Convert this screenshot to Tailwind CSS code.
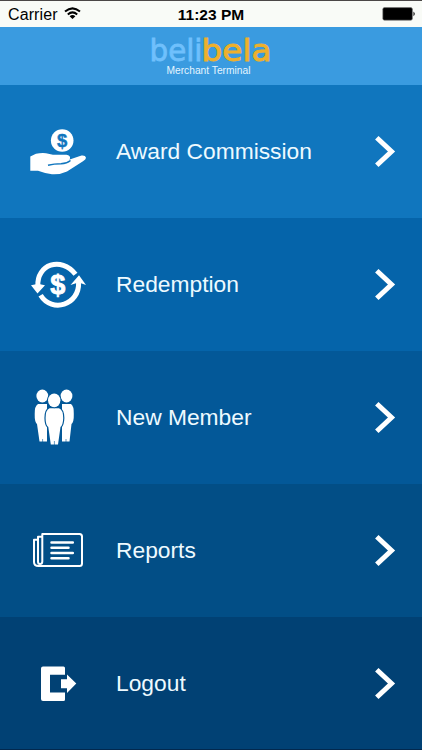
<!DOCTYPE html>
<html lang="en">
<head>
<meta charset="utf-8">
<title>belibela Merchant Terminal</title>
<script src="https://cdn.jsdelivr.net/npm/@tailwindcss/browser@4"></script>
</head>
<body class="w-[422px] h-[750px] overflow-hidden bg-[#02284e] font-['Liberation_Sans',Arial,sans-serif]">
<div class="flex flex-col w-[422px] h-[750px]">
  <div class="h-[27px] shrink-0 bg-[#f9fbf7] border-t border-[#4b4747] grid grid-cols-3 items-center text-black">
    <div class="flex items-center pl-[8px] pt-[2px]">
      <span class="text-[16px] leading-[20px] tracking-[0.1px]">Carrier</span>
      <svg class="ml-[6px] -mt-[3px]" width="17" height="13" viewBox="0 0 17 13" fill="none" stroke="#000" stroke-width="2">
        <path d="M1 4.6Q8.5-1.9 16 4.6M3.8 7.5Q8.5 3.3 13.2 7.5"/><path d="M5.6 9.2Q8.5 6.8 11.4 9.2L8.5 12z" fill="#000" stroke="none"/>
      </svg>
    </div>
    <div class="text-center text-[15.5px] leading-[20px] font-bold pt-[2px] whitespace-nowrap">11:23 PM</div>
    <div class="flex justify-end pr-[6px]">
      <svg width="34" height="14" viewBox="0 0 34 14"><rect x=".8" y=".6" width="29.6" height="12.6" rx="1.6" fill="#000" stroke="#777" stroke-width=".6"/><path d="M31.5 4.6Q34 6.9 31.5 9.2z"/></svg>
    </div>
  </div>
  <header class="h-[58px] shrink-0 bg-[#3a9be0]">
    <svg class="block" width="422" height="58" viewBox="0 27 422 58" font-family="'DejaVu Sans', sans-serif">
      <text x="149.500" y="60.800" font-size="30" textLength="53" lengthAdjust="spacingAndGlyphs" fill="#6fc0fc" stroke="#6fc0fc" stroke-width=".8">beli</text>
      <text x="201.500" y="60.800" font-size="30" textLength="70" lengthAdjust="spacingAndGlyphs" fill="#eeb02c" stroke="#eeb02c" stroke-width=".9">bela</text>
      <text x="166.500" y="73.700" font-family="'Liberation Sans', sans-serif" font-size="10.500" textLength="84" lengthAdjust="spacingAndGlyphs" fill="#e4f5ff">Merchant Terminal</text>
    </svg>
  </header>
  <main class="flex flex-col text-[22.8px] text-[#eefaff]">
    <div class="flex items-center h-[133px] bg-[#1076be]">
      <svg width="100" height="133" viewBox="0 85 100 133" fill="#fff">
        <circle cx="62.200" cy="140.500" r="11.300"/>
        <text x="62.200" y="147" text-anchor="middle" font-size="18.500" font-weight="bold" fill="#1076be" stroke="#1076be" stroke-width=".4">$</text>
        <path d="M30.300 156.500L36 153.800Q41 152.700 46 153.200L53 154.800H66.500Q70.500 155.300 70 158.500Q69.500 160.400 66 160.700L81.500 155.500Q85.500 155 86 157.800Q86 159.500 83 161.300L67 171.500Q60 174.800 52 174.300Q44 173 38 170.700L30.300 170.800z"/>
        <path d="M48 165.300Q54 163.800 61 163.800Q67 163.500 70.500 160.500" fill="none" stroke="#1076be" stroke-width="1.500"/>
      </svg>
      <span class="ml-4 flex-1">Award Commission</span>
      <svg class="mr-[22px]" width="26" height="34" viewBox="0 0 26 34" fill="none" stroke="#fff" stroke-width="5"><path d="M2.800 2.700L17.500 16.500L2.800 30.300"/></svg>
    </div>
    <div class="flex items-center h-[133px] bg-[#0564aa]">
      <svg width="100" height="133" viewBox="0 218 100 133" fill="none" stroke="#fff" stroke-width="5">
        <path d="M37.900 286C36.500 264.500 61 256 75.500 274.200"/>
        <path d="M40.600 295.200C52 313.500 79.500 305 78.600 282.500"/>
        <path d="M31 285.300L36 284.200H40L45 285.300L37.500 293.500zM70.500 285L79 275.300L86 285L81 283.300H76z" fill="#fff" stroke="none"/>
        <text x="57.800" y="293.500" text-anchor="middle" font-size="27" font-weight="bold" fill="#fff" stroke="#fff" stroke-width=".8">$</text>
      </svg>
      <span class="ml-4 flex-1">Redemption</span>
      <svg class="mr-[22px]" width="26" height="34" viewBox="0 0 26 34" fill="none" stroke="#fff" stroke-width="5"><path d="M2.800 2.700L17.500 16.500L2.800 30.300"/></svg>
    </div>
    <div class="flex items-center h-[133px] bg-[#035898]">
      <svg width="100" height="133" viewBox="0 351 100 133" fill="#fff">
        <ellipse cx="42.300" cy="396" rx="5.900" ry="6.400"/><ellipse cx="66.500" cy="396" rx="5.900" ry="6.400"/>
        <path d="M38 404H47V441.500H39.500L37 424Q34.500 422 34.700 414Q34.500 406 38 404zM62 404H71Q74 406 73.800 414Q74 422 71.500 424L69.500 441.500H62z"/>
        <path d="M49.500 408.300H59Q63.200 410 63.200 418Q63 425 60.500 427L58 444.600H50.800L48.300 427Q45.600 425 45.600 418Q45.600 410 49.500 408.300z" stroke="#035898" stroke-width="2.400" paint-order="stroke"/>
        <ellipse cx="54.200" cy="400.300" rx="6.200" ry="6.900" stroke="#035898" stroke-width="2" paint-order="stroke"/>
        <path d="M42.600 439V442M66 439V442M54.400 441V445" stroke="#035898" stroke-width=".6"/>
      </svg>
      <span class="ml-4 flex-1">New Member</span>
      <svg class="mr-[22px]" width="26" height="34" viewBox="0 0 26 34" fill="none" stroke="#fff" stroke-width="5"><path d="M2.800 2.700L17.500 16.500L2.800 30.300"/></svg>
    </div>
    <div class="flex items-center h-[133px] bg-[#024e86]">
      <svg width="100" height="133" viewBox="0 484 100 133" fill="none" stroke="#fff" stroke-width="2" stroke-linejoin="round" stroke-linecap="round">
        <path d="M42.300 534H79.500Q82 534 82 536.500V563.500Q82 566 79.500 566H38.500Q34 566 34 562V539.800H37.500M42.300 534V561.500Q42.300 564 40 564Q38 564 38 561.500V536.800H42"/>
        <path d="M51.500 542.400H72.800M51.500 547.700H68.500M51.500 553H72.800M51.500 558.200H68.500" stroke-width="2.500"/>
      </svg>
      <span class="ml-4 flex-1">Reports</span>
      <svg class="mr-[22px]" width="26" height="34" viewBox="0 0 26 34" fill="none" stroke="#fff" stroke-width="5"><path d="M2.800 2.700L17.500 16.500L2.800 30.300"/></svg>
    </div>
    <div class="flex items-start h-[132px] bg-[#014174]">
      <svg width="100" height="132" viewBox="0 617 100 132" fill="#fff">
        <path d="M43 666.500H63.500Q65 666.500 65 668V674.800H50V692.500H65V699.500Q65 701 63.500 701H43Q41 701 41 699V668.500Q41 666.500 43 666.500z"/>
        <path d="M61 679.200H67V674.500L76.300 683.600L67 693V688.300H61z"/>
      </svg>
      <span class="ml-4 flex-1 leading-[133px]">Logout</span>
      <svg class="mr-[22px] mt-[49.500px]" width="26" height="34" viewBox="0 0 26 34" fill="none" stroke="#fff" stroke-width="5"><path d="M2.800 2.700L17.500 16.500L2.800 30.300"/></svg>
    </div>
  </main>
</div>
</body>
</html>
